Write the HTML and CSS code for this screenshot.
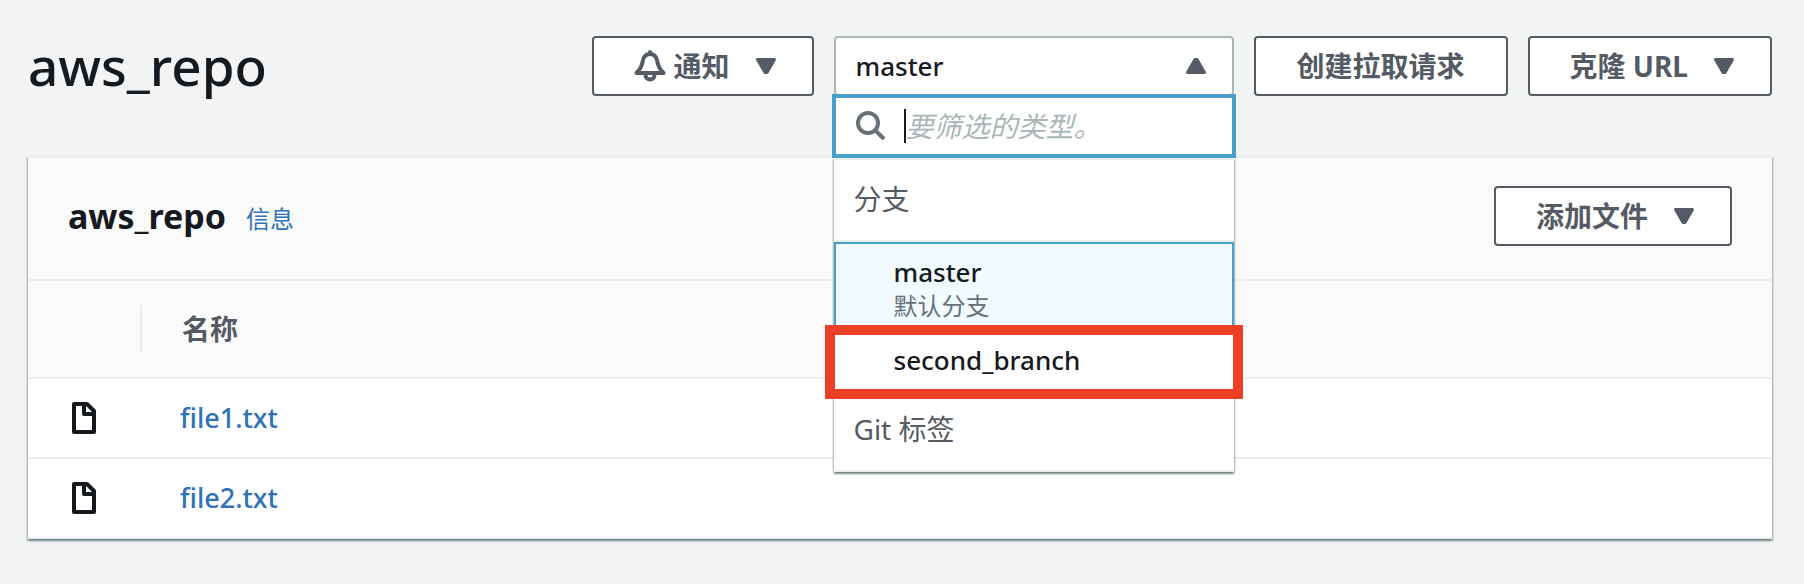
FILE: index.html
```html
<!DOCTYPE html>
<html lang="zh-CN">
<head>
<meta charset="utf-8">
<title>aws_repo</title>
<meta name="viewport" content="width=device-width, initial-scale=1">
<link rel="stylesheet" href="styles.css">
</head>
<body>
<svg class="defs" aria-hidden="true">
  <symbol id="caret" viewBox="0 0 20 16"><path d="M1.5 1.5h17L11 14.500h-2z" fill="currentColor" stroke="currentColor" stroke-width="3" stroke-linejoin="round"/></symbol>
  <symbol id="file" viewBox="0 0 24 32"><path d="M2 2h13l7 7v21H2zM12 2v10h10" fill="none" stroke="currentColor" stroke-width="4" stroke-linejoin="round"/></symbol>
</svg>
<main class="page">
  <header class="page-header">
    <h1 class="page-title">aws_repo</h1>
    <div class="actions">
      <button class="button button-menu" type="button">
        <span class="button-label">
          <svg class="bell" viewBox="0 0 32 32" aria-hidden="true"><g fill="none" stroke="currentColor" stroke-width="4" stroke-linejoin="round" stroke-linecap="round"><path d="M2.500 23C7 18.500 8 16 8.500 12C9.300 7 12 4 16 4s6.700 3 7.500 8c.5 4 1.500 6.500 6 11z"/><path d="M16 2v2"/><path d="M11.500 25c0 6 9 6 9 0" stroke-linecap="butt"/></g></svg>
          通知
        </span>
        <svg class="caret" aria-hidden="true"><use href="#caret"/></svg>
      </button>
      <div class="branch-picker">
        <select class="branch-select" aria-label="分支">
          <option>master</option>
          <option>second_branch</option>
        </select>
        <svg class="caret caret-up" aria-hidden="true"><use href="#caret"/></svg>
        <div class="dropdown">
          <div class="search">
            <svg class="search-icon" viewBox="0 0 30 30" aria-hidden="true"><g fill="none" stroke="currentColor" stroke-width="4"><circle cx="12" cy="12" r="10"/><path d="M19 19l9 9"/></g></svg>
            <span class="text-cursor"></span>
            <input class="search-input" type="text" placeholder="要筛选的类型。" aria-label="要筛选的类型。">
          </div>
          <div class="options">
            <div class="group">分支</div>
            <button class="option option-selected" type="button">master<span class="option-note">默认分支</span></button>
            <button class="option option-marked" type="button">second_branch</button>
            <div class="group">Git 标签</div>
          </div>
        </div>
      </div>
      <button class="button" type="button">创建拉取请求</button>
      <button class="button button-menu" type="button">克隆 URL <svg class="caret" aria-hidden="true"><use href="#caret"/></svg></button>
    </div>
  </header>
  <section class="card">
    <div class="card-header">
      <h2 class="card-title">aws_repo</h2>
      <a class="info" href="#">信息</a>
      <button class="button button-menu add-file" type="button">添加文件 <svg class="caret" aria-hidden="true"><use href="#caret"/></svg></button>
    </div>
    <table class="files">
      <thead>
        <tr><th class="icon-column"></th><th scope="col">名称</th></tr>
      </thead>
      <tbody>
        <tr><td class="icon-cell"><svg class="file-icon" aria-hidden="true"><use href="#file"/></svg></td><td><a href="#">file1.txt</a></td></tr>
        <tr><td class="icon-cell"><svg class="file-icon" aria-hidden="true"><use href="#file"/></svg></td><td><a href="#">file2.txt</a></td></tr>
      </tbody>
    </table>
  </section>
</main>
</body>
</html>
```
FILE: styles.css
```css
* {
  box-sizing: border-box;
}

body {
  margin: 0;
  background: #f2f3f3;
  color: #16191f;
  font-family: "Noto Sans", "Noto Sans CJK SC", sans-serif;
  font-size: 28px;
  line-height: 40px;
}

button,
input,
select {
  font: inherit;
  color: inherit;
}

svg {
  display: block;
  flex: none;
}

a {
  color: #2e73b8;
  text-decoration: none;
}

.defs {
  position: absolute;
  width: 0;
  height: 0;
}

.page {
  padding: 36px 32px 44px 28px;
}

.page-header {
  display: flex;
  justify-content: space-between;
  margin-bottom: 60px;
}

.page-title {
  margin: 0;
  font-size: 53px;
  font-weight: 500;
  line-height: 60px;
}

.actions {
  display: flex;
  gap: 20px;
}

.button {
  display: flex;
  align-items: center;
  gap: 26px;
  height: 60px;
  padding: 0 41px;
  border: 2px solid #545b64;
  border-radius: 4px;
  background: #fff;
  color: #545b64;
  font-weight: 700;
  white-space: nowrap;
}

.button-menu {
  padding: 0 36px 0 40px;
}

.button-label {
  display: flex;
  align-items: center;
  gap: 8px;
}

.bell {
  width: 32px;
  height: 32px;
}

.caret {
  width: 20px;
  height: 16px;
  color: #545b64;
}

.branch-picker {
  position: relative;
  width: 400px;
}

.branch-select {
  width: 100%;
  height: 60px;
  padding: 0 60px 0 20px;
  border: 2px solid #aab7b8;
  border-radius: 4px;
  background: #fff;
  appearance: none;
  font-size: 26px;
  font-weight: 500;
}

.caret-up {
  position: absolute;
  top: 22px;
  right: 28px;
  transform: rotate(180deg);
  pointer-events: none;
}

.dropdown {
  position: absolute;
  z-index: 1;
  top: 58px;
  left: -2px;
  right: -2px;
}

.search {
  position: relative;
  z-index: 1;
  display: flex;
  align-items: center;
  height: 64px;
  padding: 0 20px;
  border: 4px solid #48a0c7;
  background: #fff;
}

.search-icon {
  width: 30px;
  height: 30px;
  color: #687078;
}

.text-cursor {
  width: 2px;
  height: 34px;
  margin-left: 18px;
  background: #16191f;
}

.search-input {
  flex: 1;
  min-width: 0;
  padding: 0;
  border: 0;
  outline: 0;
  background: transparent;
}

.search-input::placeholder {
  color: #aab7b8;
  font-style: italic;
  opacity: 1;
}

.options {
  margin: 0 2px;
  border: solid #eaeded;
  border-width: 2px 0;
  background: #fff;
  box-shadow: 0 2px 2px rgba(0, 28, 36, 0.4), 1px 1px 2px rgba(0, 28, 36, 0.2), -1px 1px 2px rgba(0, 28, 36, 0.2);
}

.group {
  display: flex;
  align-items: center;
  height: 80px;
  padding: 0 20px 2px;
  color: #545b64;
}

.group:first-child {
  height: 82px;
  border-bottom: 2px solid #eaeded;
}

.option {
  position: relative;
  display: block;
  width: 100%;
  padding: 10px 58px;
  border: 2px solid transparent;
  background: #fff;
  font-size: 26px;
  font-weight: 500;
  line-height: 36px;
  text-align: left;
}

.option-selected {
  padding-bottom: 6px;
  border-color: #48a0c7;
  background: #f1faff;
}

.option-note {
  display: block;
  color: #687078;
  font-size: 24px;
  font-weight: 400;
  line-height: 32px;
}

.option-marked::after {
  content: "";
  position: absolute;
  inset: -7px -11px -11px;
  border: 10px solid #eb4026;
}

.card {
  border-top: 2px solid #eaeded;
  background: #fff;
  box-shadow: 0 2px 2px rgba(0, 28, 36, 0.4), 1px 1px 2px rgba(0, 28, 36, 0.2), -1px 1px 2px rgba(0, 28, 36, 0.2);
}

.card-header {
  display: flex;
  align-items: center;
  gap: 20px;
  padding: 28px 40px 33px;
  border-bottom: 2px solid #eaeded;
  background: #fafafa;
}

.card-title {
  margin: 0;
  font-size: 34px;
  font-weight: 700;
}

.info {
  padding-top: 6px;
  font-size: 24px;
}

.add-file {
  margin-left: auto;
}

.files {
  width: 100%;
  border-collapse: separate;
  border-spacing: 0;
  table-layout: fixed;
}

.files th {
  height: 98px;
  padding: 0 40px;
  border-bottom: 2px solid #eaeded;
  background: #fafafa;
  color: #545b64;
  font-weight: 700;
  text-align: left;
}

.files .icon-column {
  width: 114px;
  background: linear-gradient(#eaeded, #eaeded) right center / 2px 48px no-repeat #fafafa;
}

.files td {
  height: 80px;
  padding: 0 38px;
  border-bottom: 2px solid #eaeded;
  font-size: 27px;
  font-weight: 500;
}

.files .icon-cell {
  padding: 0 0 0 44px;
}

.file-icon {
  width: 24px;
  height: 32px;
}
```
